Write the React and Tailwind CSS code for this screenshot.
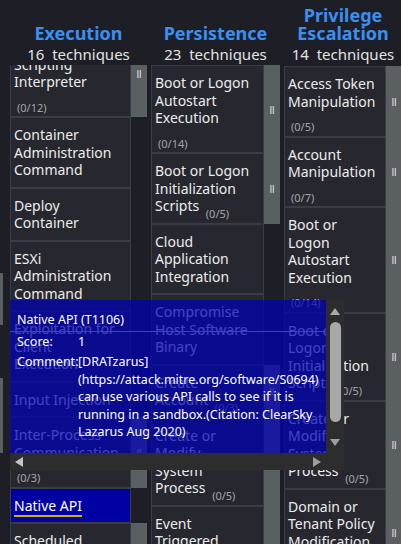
import React from 'react';

// ATT&CK-style matrix columns, scrolled, with a hover tooltip on Native API
const EXECUTION = [
  { name: 'Command and\nScripting\nInterpreter', count: '(0/12)', ownLine: true, sub: true },
  { name: 'Container\nAdministration\nCommand' },
  { name: 'Deploy\nContainer' },
  { name: 'ESXi\nAdministration\nCommand' },
  { name: 'Exploitation for\nClient\nExecution' },
  { name: 'Input Injection' },
  { name: 'Inter-Process\nCommunication', count: '(0/3)', ownLine: true, sub: true },
  { name: 'Native API', selected: true },
  { name: 'Scheduled\nTask/Job', count: '(0/5)', sub: true },
  { name: 'Serverless\nExecution' },
];

const PERSISTENCE = [
  { name: 'Boot or Logon\nAutostart\nExecution', count: '(0/14)', ownLine: true, sub: true },
  { name: 'Boot or Logon\nInitialization\nScripts', count: '(0/5)', sub: true },
  { name: 'Cloud\nApplication\nIntegration' },
  { name: 'Compromise\nHost Software\nBinary' },
  { name: 'Create\nAccount', count: '(0/3)', sub: true },
  { name: 'Create or\nModify\nSystem\nProcess', count: '(0/5)', sub: true },
  { name: 'Event\nTriggered\nExecution', count: '(0/17)', ownLine: true, sub: true },
];

const PRIVILEGE = [
  { name: 'Access Token\nManipulation', count: '(0/5)', ownLine: true, sub: true },
  { name: 'Account\nManipulation', count: '(0/7)', ownLine: true, sub: true },
  { name: 'Boot or\nLogon\nAutostart\nExecution', count: '(0/14)', ownLine: true, sub: true },
  { name: 'Boot or\nLogon\nInitialization\nScripts', count: '(0/5)', sub: true },
  { name: 'Create or\nModify\nSystem\nProcess', count: '(0/5)', sub: true },
  { name: 'Domain or\nTenant Policy\nModification', count: '(0/2)', ownLine: true, sub: true },
];

const COMMENT = [
  '[DRATzarus]',
  '(https://attack.mitre.org/software/S0694)',
  'can use various API calls to see if it is',
  'running in a sandbox.(Citation: ClearSky',
  'Lazarus Aug 2020)',
];

const countClass = 'relative top-[7px] ml-[3px] text-[11px] leading-none text-[#a5a5a5]';

const Technique = ({ t, cellWidth }) => (
  <div className="flex">
    <div
      className={`${cellWidth} shrink-0 border border-[#3b3c44] px-[3px] py-[8px] text-[14px] leading-[17.5px] whitespace-pre-line ${
        t.selected ? 'bg-[#0000a3] text-white' : 'bg-[#27282f] text-[#ececec]'
      }`}
    >
      <span className={t.selected ? 'underline decoration-[#c8b400] decoration-2 underline-offset-[4px]' : ''}>{t.name}</span>
      {t.count && !t.ownLine && <> <span className={countClass}>{t.count}</span></>}
      {t.count && t.ownLine && (
        <div className="h-[17.5px]">
          <span className={countClass}>{t.count}</span>
        </div>
      )}
    </div>
    {t.sub ? (
      <div className="w-[16px] shrink-0 bg-[#5a5f61] flex items-center justify-center text-[11px] leading-none text-[#f3e4f1]">ǁ</div>
    ) : (
      <div className="w-[16px] shrink-0" />
    )}
  </div>
);

const Column = ({ title, total, items, cellWidth, colWidth, offset }) => (
  <div className={`${colWidth} shrink-0 flex flex-col h-full`}>
    <div className="h-[65px] shrink-0 flex flex-col justify-end items-center text-center pb-[2px]">
      <div className="text-[#3a8ff0] font-bold text-[18px] leading-[18px] mb-[3px]">{title}</div>
      <div className="text-[15px] leading-[18px] text-[#e2e2e2]">{total}&nbsp;&nbsp;techniques</div>
    </div>
    <div className="flex-1 overflow-hidden">
      <div className={`flex flex-col ${offset}`}>
        {items.map((t, i) => (
          <Technique key={i} t={t} cellWidth={cellWidth} />
        ))}
      </div>
    </div>
  </div>
);

const Tooltip = () => (
  <div className="absolute left-[10px] top-[300px] w-[334px] h-[170px] flex flex-col text-white text-[12.5px]">
    <div className="flex flex-1 min-h-0">
      <div className="flex-1 bg-[rgba(0,0,180,0.72)] overflow-hidden pt-[11px]">
        <div className="px-[7px] pb-[2px] border-b border-[#4b4b66] leading-[18px]">Native API (T1106)</div>
        <div className="px-[7px] pt-[1px]">
          <div className="flex leading-[18px]">
            <div className="w-[61px] shrink-0">Score:</div>
            <div>1</div>
          </div>
          <div className="flex leading-[17.5px] mt-[2px]">
            <div className="w-[61px] shrink-0 whitespace-nowrap">Comment:</div>
            <div className="whitespace-nowrap">
              {COMMENT.map((line) => (
                <div key={line}>{line}</div>
              ))}
            </div>
          </div>
        </div>
      </div>
      {/* vertical scrollbar */}
      <div className="w-[18px] shrink-0 bg-[#2d2d2d] flex flex-col items-center">
        <div className="h-[22px] flex items-center justify-center">
          <svg width="10" height="7" viewBox="0 0 10 7"><polygon points="5,0 10,7 0,7" fill="#a9a9a9" /></svg>
        </div>
        <div className="w-[11px] h-[100px] rounded-full bg-[#a8a8a8]" />
        <div className="flex-1 flex items-end justify-center pb-[7px]">
          <svg width="10" height="7" viewBox="0 0 10 7"><polygon points="0,0 10,0 5,7" fill="#a0a0a0" /></svg>
        </div>
      </div>
    </div>
    {/* horizontal scrollbar */}
    <div className="h-[17px] shrink-0 bg-[#2d2d2d] flex items-center pl-[5px] pr-[23px]">
      <svg width="8" height="10" viewBox="0 0 8 10"><polygon points="0,5 8,0 8,10" fill="#c4c4c4" /></svg>
      <div className="flex-1" />
      <svg width="8" height="10" viewBox="0 0 8 10"><polygon points="0,0 8,5 0,10" fill="#9e9e9e" /></svg>
    </div>
  </div>
);

export default function App() {
  return (
    <div className="relative w-[401px] h-[544px] overflow-hidden bg-[#1e1f26] font-['Noto_Sans',sans-serif]">
      <div className="flex h-full">
        {/* edge of the previous column, scrolled out of view */}
        <div className="w-[3px] shrink-0 flex flex-col">
          <div className="mt-[273px] h-[52px] bg-[#5a5f61]" />
          <div className="mt-[53px] h-[75px] bg-[#5a5f61]" />
        </div>
        <div className="ml-[7px]">
          <Column title="Execution" total="16" items={EXECUTION} cellWidth="w-[121px]" colWidth="w-[137px]" offset="-mt-[36px]" />
        </div>
        <div className="ml-[4px]">
          <Column title="Persistence" total="23" items={PERSISTENCE} cellWidth="w-[113px]" colWidth="w-[129px]" offset="mt-0" />
        </div>
        <div className="ml-[4px]">
          <Column title="Privilege Escalation" total="14" items={PRIVILEGE} cellWidth="w-[102px]" colWidth="w-[118px]" offset="mt-[1px]" />
        </div>
      </div>
      <Tooltip />
    </div>
  );
}
